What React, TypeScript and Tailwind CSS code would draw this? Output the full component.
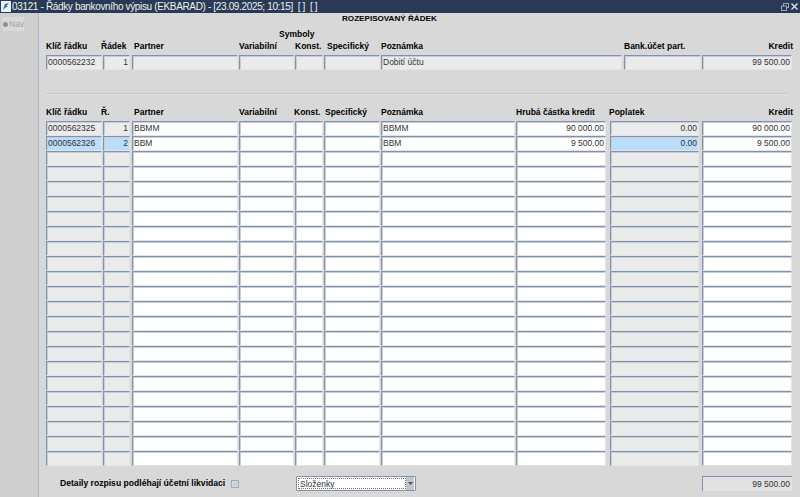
const topCols = [
  "w-[56px]",
  "w-[27px] ml-px",
  "w-[106px] ml-[2px]",
  "w-[55px] ml-px",
  "w-[28px] ml-px",
  "w-[56px] ml-px",
  "w-[241px] ml-px",
  "w-[77px] ml-[2px]",
  "w-[90px] ml-px",
];

const rowCols = [
  "w-[56px]",
  "w-[27px] ml-px",
  "w-[106px] ml-[2px]",
  "w-[55px] ml-px",
  "w-[28px] ml-px",
  "w-[56px] ml-px",
  "w-[134px] ml-px",
  "w-[90px] ml-px",
  "w-[89px] ml-[4px]",
  "w-[90px] ml-[3px]",
];

const rows = [
  ["0000562325", "1", "BBMM", "", "", "", "BBMM", "90 000.00", "0.00", "90 000.00"],
  ["0000562326", "2", "BBM", "", "", "", "BBM", "9 500.00", "0.00", "9 500.00"],
];

const readOnly = [0, 1, 8];
const rightAligned = [1, 7, 8, 9];

function Cell({
  className,
  text,
  gray,
  active,
  right,
}: {
  className: string;
  text?: string;
  gray?: boolean;
  active?: boolean;
  right?: boolean;
}) {
  const bg = active ? "bg-[#bcdcfb]" : gray ? "bg-[#ebebeb]" : "bg-white";
  return (
    <div
      className={`${className} ${bg} ${
        right ? "text-right" : "text-left"
      } h-[15px] shrink-0 border border-t-[#8093ae] border-l-[#8093ae] border-r-[#e4e4e4] border-b-[#e4e4e4] shadow-[inset_1px_1px_0_#c6cdd9] px-px text-[8.5px] leading-[13px] text-[#333] overflow-hidden whitespace-nowrap`}
    >
      {text}
    </div>
  );
}

function Label({ className, children }: { className: string; children?: string }) {
  return <span className={`${className} shrink-0 whitespace-nowrap`}>{children}</span>;
}

export default function App() {
  const emptyRows = Array.from({ length: 21 }, (_, i) => i);

  return (
    <div className="w-[800px] h-[497px] overflow-hidden flex flex-col bg-[#d8d8d8] font-['Liberation_Sans',Arial,sans-serif]">
      <div className="h-[13px] shrink-0 bg-[#283a55] flex items-center text-[#f0f0f0]">
        <svg width="10" height="11" viewBox="0 0 10 11" className="ml-px shrink-0">
          <rect width="10" height="11" fill="#e8f1fb" />
          <path d="M2 9 L4 3 L8 2 L5 5 L7 5 L4 7 Z" fill="#1f5fc0" />
        </svg>
        <span className="ml-px text-[10px] tracking-[-0.35px] leading-[13px] whitespace-pre">
          03121 - Řádky bankovního výpisu (EKBARAD) - [23.09.2025; 10:15]  [ ]  [ ]
        </span>
        <div className="ml-auto mr-[2px] flex items-center gap-[2px]">
          <svg width="8" height="8" viewBox="0 0 8 8">
            <rect x="2.5" y="0.5" width="5" height="4" fill="none" stroke="#9aa6b6" />
            <rect x="0.5" y="3" width="5" height="4.5" fill="#283a55" stroke="#9aa6b6" />
          </svg>
          <svg width="7" height="7" viewBox="0 0 7 7">
            <path d="M0.5 0.5 L6.5 6.5 M6.5 0.5 L0.5 6.5" stroke="#e8e8e8" strokeWidth="1.3" />
          </svg>
        </div>
      </div>

      <div className="flex-1 flex min-h-0">
        <div className="w-[39px] shrink-0 bg-[#cfcfcf] border-r border-r-[#aab7ca] pt-[4px] pl-[2px]">
          <div className="w-[22px] h-[14px] bg-[#d9d9d9] flex items-center gap-px pl-px">
            <span className="w-[5px] h-[5px] rounded-full bg-[#8c949c] shrink-0" />
            <span className="text-[8.5px] leading-[14px] text-[#a3a3a3]">Nav</span>
          </div>
        </div>

        <div className="flex-1 min-w-0 pl-[7px] text-[8.5px] text-black">
          <div className="h-[12px] pl-[296px] text-[8.1px] font-bold leading-[12px] whitespace-nowrap">
            ROZEPISOVANÝ ŘÁDEK
          </div>
          <div className="mt-[4px] h-[11px] pl-[233px] font-bold leading-[11px]">Symboly</div>

          <div className="h-[12px] w-[747px] flex font-bold leading-[12px]">
            <Label className="w-[55px]">Klíč řádku</Label>
            <Label className="w-[33px]">Řádek</Label>
            <Label className="w-[105px]">Partner</Label>
            <Label className="w-[56px]">Variabilní</Label>
            <Label className="w-[32px]">Konst.</Label>
            <Label className="w-[54px]">Specifický</Label>
            <Label className="w-[243px]">Poznámka</Label>
            <Label className="w-[90px]">Bank.účet part.</Label>
            <Label className="flex-1 text-right">Kredit</Label>
          </div>
          <div className="mt-[3px] flex">
            {topCols.map((c, i) => (
              <Cell
                key={i}
                className={c}
                gray
                text={i === 0 ? "0000562232" : i === 1 ? "1" : i === 6 ? "Dobití účtu" : i === 8 ? "99 500.00" : ""}
                right={i === 1 || i === 8}
              />
            ))}
          </div>

          <div className="mt-[23px] h-[2px] w-[742px] bg-[#c4c4c4] border-b border-b-[#e2e2e2]" />

          <div className="mt-[11px] h-[12px] w-[747px] flex font-bold leading-[12px]">
            <Label className="w-[55px]">Klíč řádku</Label>
            <Label className="w-[33px]">Ř.</Label>
            <Label className="w-[105px]">Partner</Label>
            <Label className="w-[55px]">Variabilní</Label>
            <Label className="w-[31px]">Konst.</Label>
            <Label className="w-[56px]">Specifický</Label>
            <Label className="w-[135px]">Poznámka</Label>
            <Label className="w-[93px]">Hrubá částka kredit</Label>
            <Label className="w-[60px]">Poplatek</Label>
            <Label className="flex-1 text-right">Kredit</Label>
          </div>

          <div className="mt-[3px] flex flex-col">
            {rows.map((row, r) => (
              <div key={r} className="flex">
                {row.map((v, i) => (
                  <Cell
                    key={i}
                    className={rowCols[i]}
                    text={v}
                    gray={readOnly.includes(i)}
                    active={r === 1 && readOnly.includes(i)}
                    right={rightAligned.includes(i)}
                  />
                ))}
              </div>
            ))}
            {emptyRows.map((r) => (
              <div key={r} className="flex">
                {rowCols.map((c, i) => (
                  <Cell key={i} className={c} gray={readOnly.includes(i)} />
                ))}
              </div>
            ))}
          </div>

          <div className="mt-[10px] h-[15px] flex items-center">
            <span className="ml-[14px] w-[171px] shrink-0 text-[8.6px] font-bold whitespace-nowrap">
              Detaily rozpisu podléhají účetní likvidaci
            </span>
            <svg width="8" height="8" viewBox="0 0 8 8" className="shrink-0">
              <rect x="0.5" y="0.5" width="7" height="7" fill="#d4d8de" stroke="#a0aabb" />
              <path d="M2 4 L3.5 5.5 L6 2.5" fill="none" stroke="#b4bac4" />
            </svg>
            <div className="ml-[57px] w-[120px] h-[15px] shrink-0 flex items-center bg-white border border-[#8093ae] rounded-[1px] pr-px">
              <div className="flex-1 h-[11px] ml-px border border-dotted border-[#777] text-[8.5px] leading-[10px] text-[#333] pl-px">
                Složenky
              </div>
              <div className="w-[8px] h-[13px] bg-[#c2c6cc] flex items-center justify-center">
                <svg width="5" height="3" viewBox="0 0 5 3">
                  <path d="M0 0 L5 0 L2.5 3 Z" fill="#555" />
                </svg>
              </div>
            </div>
            <div className="ml-[286px] w-[90px] h-[15px] shrink-0 bg-[#e2e2e2] border-t border-l border-t-[#8093ae] border-l-[#8093ae] text-right pr-[2px] leading-[14px] text-[#333]">
              99 500.00
            </div>
          </div>
        </div>
      </div>
    </div>
  );
}
